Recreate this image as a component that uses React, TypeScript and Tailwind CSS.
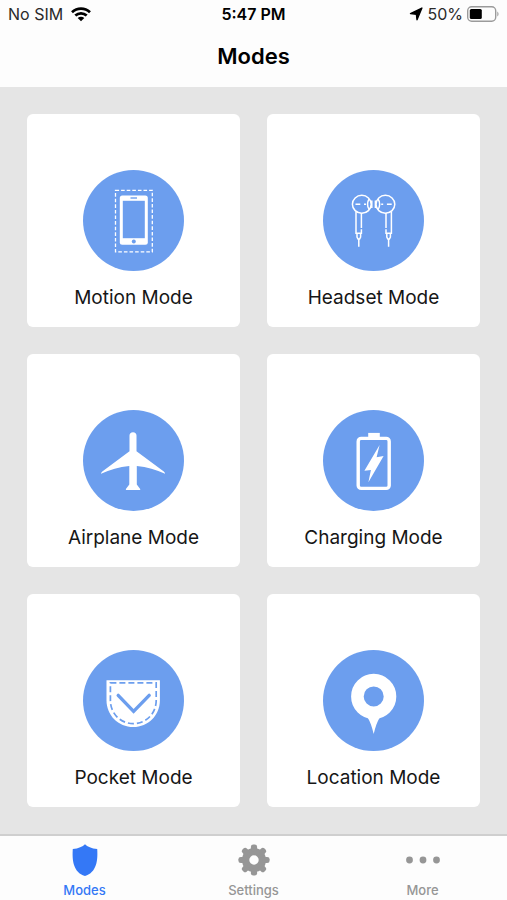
import type { ReactNode } from 'react'
import clsx from 'clsx'

const BLUE = '#6c9eee'

const PhoneIcon = () => (
  <>
    <rect x="32.5" y="20.3" width="36.8" height="61.6" fill="none" stroke="#fff" strokeWidth="1.3" strokeDasharray="3.6 2" />
    <rect x="36.8" y="25.5" width="28" height="49.2" rx="2.5" fill="#fff" />
    <rect x="39.8" y="30.8" width="22" height="37.4" fill={BLUE} />
    <path d="M47.5 28h6.5" stroke={BLUE} strokeWidth="1.4" />
    <circle cx="50.8" cy="71.6" r="2" fill={BLUE} />
  </>
)

const HeadsetIcon = () => (
  <g fill="none" stroke="#fff" strokeWidth="1.5">
    <ellipse cx="38.8" cy="34.3" rx="9.4" ry="9" />
    <path d="M46.2 29c-2.2 3-2.2 7.600 0 10.600M48.800 30.500v7.600M32.500 34.300h4.800M41 34.300h2" />
    <path d="M33 41.500v21.800h5.400v-4M38.400 43v15M34 63.500v3.500l1 2h1.600l1-2v-3.500M35.800 69v7.700" />
    <ellipse cx="62.4" cy="34.3" rx="9.4" ry="9" />
    <path d="M55 29c2.200 3 2.200 7.600 0 10.600M52.400 30.500v7.600M63.900 34.300h4.800M58.200 34.300h2" />
    <path d="M68.400 41.500v21.800H63v-4M63 43v15M67.400 63.500v3.500l-1 2h-1.600l-1-2v-3.500M65.600 69v7.700" />
  </g>
)

const AirplaneIcon = () => (
  <path
    fill="#fff"
    d="M50 22.2c2.2 0 3.5 1.5 3.5 3.4v15.6L80.8 61.4c1 .9 1.3 1.5 1.3 2.3-9-4-18-6.6-28.3-7.7v18.600l3.400 4.300v1H42.900v-1l3.400-4.300V56c-10.300 1-19.300 3.700-28.300 7.700 0-.8.3-1.400 1.300-2.300l27.200-20.200V25.600c0-1.900 1.300-3.400 3.500-3.400z"
  />
)

const BatteryIcon = () => (
  <>
    <rect x="35.2" y="28.4" width="31" height="50" rx="3" fill="none" stroke="#fff" strokeWidth="3.4" />
    <path d="M45.2 22.9h11.6v5H45.2z" fill="#fff" />
    <path d="M56.6 35 41.4 60.8l6.5-.9-2.5 12.4 15.2-26.4-7 1.4z" fill="#fff" />
  </>
)

const PocketIcon = () => (
  <>
    <path d="M23.5 30.2h53.4v20c0 15-11.7 26.8-26.7 26.8S23.5 65.2 23.5 50.2z" fill="#fff" />
    <path
      d="M27.4 32.8h45.800v17.600c0 13-10 23.200-22.900 23.200S27.400 63.400 27.400 50.400z"
      fill="none"
      stroke={BLUE}
      strokeWidth="1.7"
      strokeDasharray="6 3"
    />
    <path d="m35.2 45.4 15.4 16 15.6-16" fill="none" stroke={BLUE} strokeWidth="3.4" strokeLinecap="round" />
  </>
)

const LocationIcon = () => (
  <>
    <path d="M44.600 67.500c2.500 4 4.400 9.500 6.100 16.400 1.700-6.900 3.600-12.400 6.100-16.400z" fill="#fff" />
    <circle cx="50.7" cy="46.4" r="16.3" fill="none" stroke="#fff" strokeWidth="12.6" />
  </>
)

const modes: { name: string; icon: ReactNode }[] = [
  { name: 'Motion Mode', icon: <PhoneIcon /> },
  { name: 'Headset Mode', icon: <HeadsetIcon /> },
  { name: 'Airplane Mode', icon: <AirplaneIcon /> },
  { name: 'Charging Mode', icon: <BatteryIcon /> },
  { name: 'Pocket Mode', icon: <PocketIcon /> },
  { name: 'Location Mode', icon: <LocationIcon /> },
]

const teeth = [0, 45, 90, 135, 180, 225, 270, 315]

const tabs: { name: string; icon: ReactNode }[] = [
  {
    name: 'Modes',
    icon: <path d="M20 .2c2.3 2.3 6.5 4.3 12.2 4.8.8 11-.4 23.5-12.2 27C8.2 28.5 7 16 7.8 5 13.5 4.5 17.7 2.5 20 .2z" />,
  },
  {
    name: 'Settings',
    icon: (
      <>
        <circle cx="20" cy="16" r="8.4" fill="none" stroke="currentColor" strokeWidth="7.4" />
        {teeth.map((angle) => (
          <rect key={angle} x="16.9" y=".4" width="6.2" height="7" rx="2.4" transform={`rotate(${angle} 20 16)`} />
        ))}
      </>
    ),
  },
  {
    name: 'More',
    icon: (
      <>
        <circle cx="6.5" cy="16" r="3.4" />
        <circle cx="20" cy="16" r="3.4" />
        <circle cx="33.5" cy="16" r="3.4" />
      </>
    ),
  },
]

const StatusBar = () => (
  <div className="grid grid-cols-3 items-center h-7 px-2 text-base text-[#2a2a2a]">
    <div className="flex items-center gap-2">
      <span>No SIM</span>
      <svg className="w-5 h-4" viewBox="0 0 20 16" fill="none" stroke="#000" strokeWidth="2.7">
        <path d="M1 6.2c5.2-4.9 12.8-4.9 18 0M4.3 9.6c3.3-3.1 8.1-3.1 11.4 0" />
        <path d="M10 15.2 6.7 12c1.900-1.700 4.700-1.700 6.600 0z" fill="#000" stroke="none" />
      </svg>
    </div>
    <span className="text-center font-semibold text-black">5:47 PM</span>
    <div className="flex items-center justify-end gap-1">
      <svg className="size-3.5" viewBox="0 0 14 14">
        <path d="M12.900 1.100 8 12.800 7.400 7.200 1.500 6.600z" stroke="#000" strokeWidth="1.400" strokeLinejoin="round" />
      </svg>
      <span>50%</span>
      <svg className="w-8 h-4" viewBox="0 0 32 16">
        <rect x=".7" y=".8" width="28" height="14.4" rx="4" fill="none" stroke="#9b9b9b" strokeWidth="1.4" />
        <rect x="2.8" y="3" width="12" height="10" rx="1.5" />
        <path d="M30.3 5.5c1.6.8 1.6 4.2 0 5z" fill="#9b9b9b" />
      </svg>
    </div>
  </div>
)

const ModeCard = ({ name, icon }: { name: string; icon: ReactNode }) => (
  <button
    type="button"
    className="flex flex-col items-center aspect-square bg-white rounded-md pt-14 text-[19px] leading-7 text-[#161616]"
  >
    <svg className="size-[101px]" viewBox="0 0 101 101">
      <circle cx="50.5" cy="50.5" r="50.5" fill={BLUE} />
      {icon}
    </svg>
    <span className="mt-[13px]">{name}</span>
  </button>
)

export default function App() {
  return (
    <div className="flex flex-col min-h-screen bg-[#e5e5e5] font-['Inter',sans-serif]">
      <header className="bg-[#fdfdfd] h-[87px]">
        <StatusBar />
        <h1 className="py-3 text-center text-[22px] leading-8 font-semibold text-black">Modes</h1>
      </header>

      <main className="grid grid-cols-2 content-start gap-[27px] p-[27px] grow">
        {modes.map((mode) => (
          <ModeCard key={mode.name} {...mode} />
        ))}
      </main>

      <nav className="grid grid-cols-3 h-[66px] bg-[#fdfdfd] border-t-2 border-[#cfcfcf]">
        {tabs.map(({ name, icon }, i) => (
          <a
            key={name}
            href={`#${name.toLowerCase()}`}
            className={clsx(
              'flex flex-col items-center pt-2 text-[13px] leading-4 font-medium',
              i === 0 ? 'text-[#3478f6]' : 'text-[#969696]'
            )}
          >
            <svg className="w-10 h-8 mb-1.5 shrink-0" viewBox="0 0 40 32" fill="currentColor">
              {icon}
            </svg>
            {name}
          </a>
        ))}
      </nav>
    </div>
  )
}
